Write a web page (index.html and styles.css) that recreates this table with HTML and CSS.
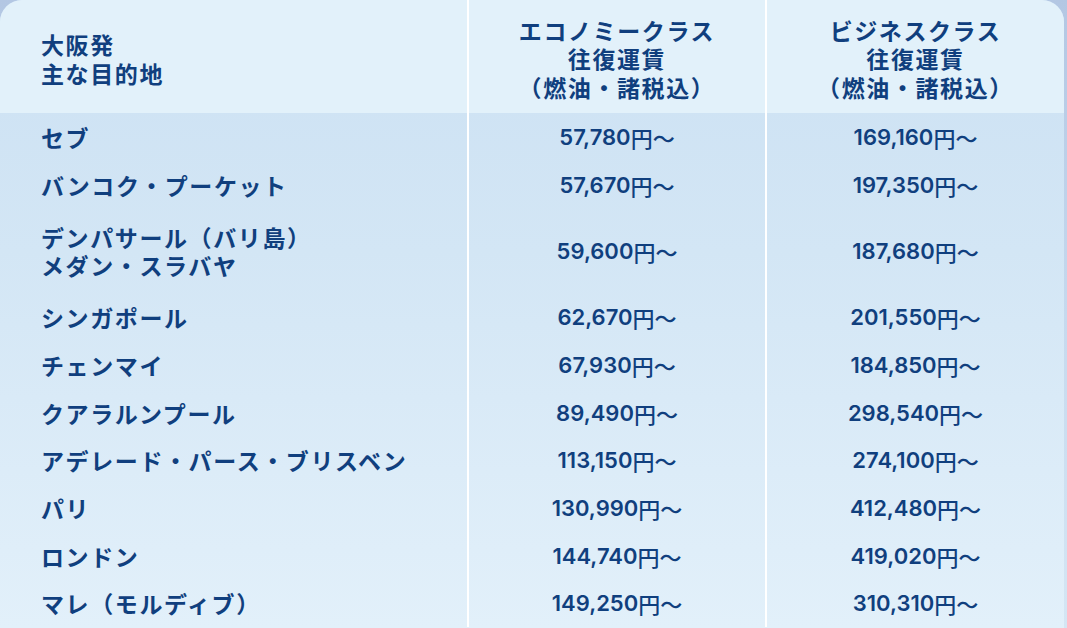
FILE: index.html
```html
<!DOCTYPE html>
<html lang="ja">
<head>
<meta charset="utf-8">
<title>大阪発 主な目的地 運賃表</title>
<link rel="stylesheet" href="styles.css">
</head>
<body>
<div class="page">
  <div class="card">
    <div class="row head">
      <div class="cell dest">大阪発<br>主な目的地</div>
      <div class="cell price">エコノミークラス<br>往復運賃<br>（燃油・諸税込）</div>
      <div class="cell price">ビジネスクラス<br>往復運賃<br>（燃油・諸税込）</div>
    </div>
    <div class="row">
      <div class="cell dest">セブ</div>
      <div class="cell price"><span class="num">57,780</span>円〜</div>
      <div class="cell price"><span class="num">169,160</span>円〜</div>
    </div>
    <div class="row">
      <div class="cell dest">バンコク・プーケット</div>
      <div class="cell price"><span class="num">57,670</span>円〜</div>
      <div class="cell price"><span class="num">197,350</span>円〜</div>
    </div>
    <div class="row tall">
      <div class="cell dest">デンパサール（バリ島）<br>メダン・スラバヤ</div>
      <div class="cell price"><span class="num">59,600</span>円〜</div>
      <div class="cell price"><span class="num">187,680</span>円〜</div>
    </div>
    <div class="row">
      <div class="cell dest">シンガポール</div>
      <div class="cell price"><span class="num">62,670</span>円〜</div>
      <div class="cell price"><span class="num">201,550</span>円〜</div>
    </div>
    <div class="row">
      <div class="cell dest">チェンマイ</div>
      <div class="cell price"><span class="num">67,930</span>円〜</div>
      <div class="cell price"><span class="num">184,850</span>円〜</div>
    </div>
    <div class="row">
      <div class="cell dest">クアラルンプール</div>
      <div class="cell price"><span class="num">89,490</span>円〜</div>
      <div class="cell price"><span class="num">298,540</span>円〜</div>
    </div>
    <div class="row">
      <div class="cell dest">アデレード・パース・ブリスベン</div>
      <div class="cell price"><span class="num">113,150</span>円〜</div>
      <div class="cell price"><span class="num">274,100</span>円〜</div>
    </div>
    <div class="row">
      <div class="cell dest">パリ</div>
      <div class="cell price"><span class="num">130,990</span>円〜</div>
      <div class="cell price"><span class="num">412,480</span>円〜</div>
    </div>
    <div class="row">
      <div class="cell dest">ロンドン</div>
      <div class="cell price"><span class="num">144,740</span>円〜</div>
      <div class="cell price"><span class="num">419,020</span>円〜</div>
    </div>
    <div class="row">
      <div class="cell dest">マレ（モルディブ）</div>
      <div class="cell price"><span class="num">149,250</span>円〜</div>
      <div class="cell price"><span class="num">310,310</span>円〜</div>
    </div>
  </div>
</div>
</body>
</html>
```

FILE: styles.css
```css
html, body {
  margin: 0;
  padding: 0;
}

body {
  width: 1067px;
  height: 628px;
  overflow: hidden;
  background: linear-gradient(180deg, #b3c7e3 0%, #c6d9ee 50%, #d5e6f4 100%);
  font-family: "Noto Sans CJK JP", "Noto Sans", sans-serif;
  color: #103f7e;
}

.page {
  width: 1067px;
  height: 628px;
}

.card {
  width: 1064px;
  height: 628px;
  border-radius: 22px 22px 0 0;
  overflow: hidden;
  background: linear-gradient(180deg, #cce1f3 0%, #d3e6f5 40%, #dcecf8 75%, #e2f0fa 100%);
}

.row {
  display: grid;
  grid-template-columns: 467px 298px 299px;
  height: 47.7px;
}

.row.tall {
  height: 85px;
}

.row.head {
  height: 113px;
  background: #e2f1fa;
}

.cell {
  box-sizing: border-box;
  display: flex;
  align-items: center;
  font-weight: 700;
  font-size: 23px;
  line-height: 28px;
  letter-spacing: 1.6px;
}

.head .cell {
  padding-top: 4px;
  line-height: 28.5px;
}

.dest {
  padding-left: 41px;
}

.price {
  justify-content: center;
  text-align: center;
  border-left: 2px solid #ffffff;
  font-size: 22px;
  font-weight: 500;
  letter-spacing: 0;
}

.head .price {
  font-size: 23px;
  font-weight: 700;
  letter-spacing: 1.6px;
}

.num {
  font-family: "Inter", "Noto Sans", sans-serif;
  font-weight: 600;
  font-size: 22px;
  letter-spacing: 0;
}
```
